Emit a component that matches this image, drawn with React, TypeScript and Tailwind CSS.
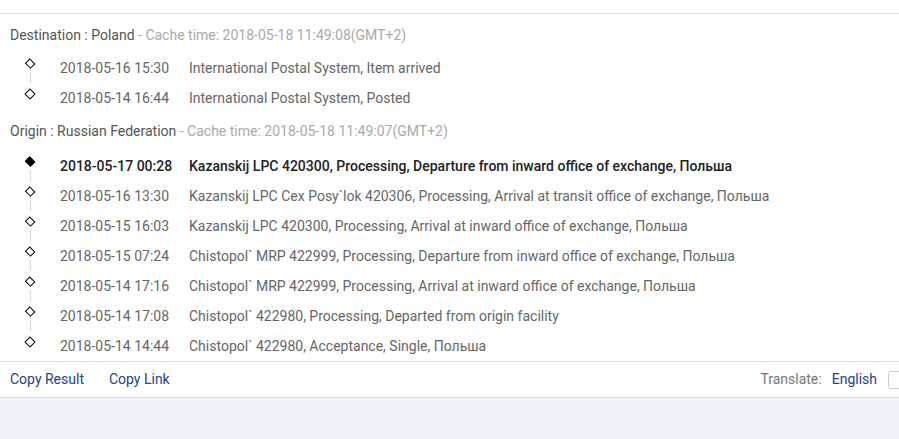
import React from "react"

type Event = { date: string; text: string; active?: boolean }

const destination: Event[] = [
  { date: "2018-05-16 15:30", text: "International Postal System, Item arrived" },
  { date: "2018-05-14 16:44", text: "International Postal System, Posted" },
]

const origin: Event[] = [
  { date: "2018-05-17 00:28", text: "Kazanskij LPC 420300, Processing, Departure from inward office of exchange, Польша", active: true },
  { date: "2018-05-16 13:30", text: "Kazanskij LPC Cex Posy`lok 420306, Processing, Arrival at transit office of exchange, Польша" },
  { date: "2018-05-15 16:03", text: "Kazanskij LPC 420300, Processing, Arrival at inward office of exchange, Польша" },
  { date: "2018-05-15 07:24", text: "Chistopol` MRP 422999, Processing, Departure from inward office of exchange, Польша" },
  { date: "2018-05-14 17:16", text: "Chistopol` MRP 422999, Processing, Arrival at inward office of exchange, Польша" },
  { date: "2018-05-14 17:08", text: "Chistopol` 422980, Processing, Departed from origin facility" },
  { date: "2018-05-14 14:44", text: "Chistopol` 422980, Acceptance, Single, Польша" },
]

function Timeline({ events }: { events: Event[] }) {
  return (
    <ul>
      {events.map((ev, i) => (
        <li key={i} className="flex h-[30px]">
          <div className="w-[60px] shrink-0 flex flex-col items-center pt-[7px]">
            <span
              className={
                ev.active
                  ? "block w-[8px] h-[8px] rotate-45 border-[1.5px] border-black bg-black"
                  : "block w-[8px] h-[8px] rotate-45 border-[1.5px] border-black bg-white"
              }
            />
            {i < events.length - 1 && <span className="block w-px h-[12px] mt-[5px] bg-[#d6d6d6]" />}
          </div>
          <div
            className={
              ev.active
                ? "flex leading-[30px] text-[#222] font-medium"
                : "flex leading-[30px] text-[#666]"
            }
          >
            <span className="w-[129px] shrink-0">{ev.date}</span>
            <span className="whitespace-nowrap">{ev.text}</span>
          </div>
        </li>
      ))}
    </ul>
  )
}

export default function App() {
  return (
    <div className="w-[899px] h-[439px] overflow-hidden bg-[#eff2f9] text-[14px]" style={{ fontFamily: "Roboto, 'Liberation Sans', sans-serif" }}>
      <div className="bg-white">
        <div className="h-[14px] border-b border-[#dedede]" />

        <div className="pl-[10px] pt-[11px] mb-[8px] leading-[20px]">
          <span className="text-[#555]">Destination : Poland</span>
          <span className="text-[#aaa]"> - Cache time: 2018-05-18 11:49:08(GMT+2)</span>
        </div>
        <Timeline events={destination} />

        <div className="pl-[10px] pt-[8px] mb-[10px] leading-[20px]">
          <span className="text-[#555]">Origin : Russian Federation</span>
          <span className="text-[#aaa]"> - Cache time: 2018-05-18 11:49:07(GMT+2)</span>
        </div>
        <Timeline events={origin} />

        <div className="h-[37px] border-t border-b border-[#dedede] flex items-center pl-[10px] overflow-hidden">
          <a className="text-[#27408b] cursor-pointer">Copy Result</a>
          <a className="text-[#27408b] cursor-pointer ml-[25px]">Copy Link</a>
          <div className="ml-auto -mr-[29px] flex items-center">
            <span className="text-[#777]">Translate:</span>
            <a className="text-[#27408b] ml-[10px]">English</a>
            <div className="ml-[11px] w-[40px] h-[18px] border border-[#ccc] rounded-[3px] bg-white" />
          </div>
        </div>
      </div>
    </div>
  )
}
